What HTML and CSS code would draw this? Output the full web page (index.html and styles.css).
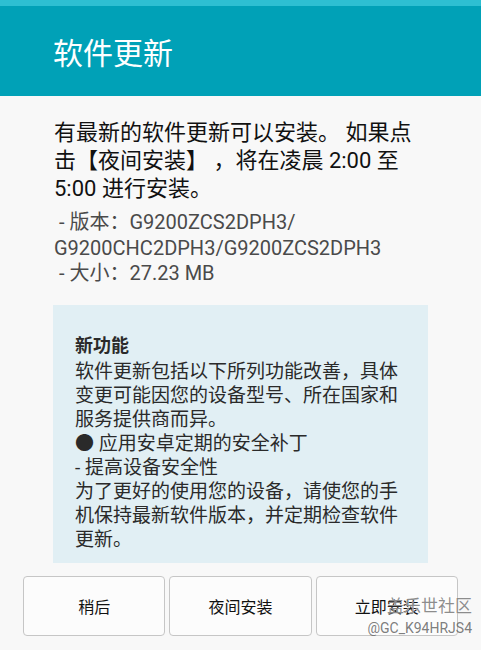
FILE: index.html
```html
<!DOCTYPE html>
<html lang="zh-CN">
<head>
    <meta charset="UTF-8">
    <meta name="viewport" content="width=device-width, initial-scale=1.0">
    <title>软件更新</title>
    <link rel="stylesheet" href="styles.css">
</head>
<body>
    <div class="status-strip"></div>

    <!-- Dialog title -->
    <header class="title-bar">
        <h1>软件更新</h1>
    </header>

    <main class="content">
        <p class="intro">有最新的软件更新可以安装。 如果点<br>击【夜间安装】 ，将在凌晨 2:00 至<br>5:00 进行安装。</p>
        <p class="meta">&nbsp;- 版本：G9200ZCS2DPH3/<br>G9200CHC2DPH3/G9200ZCS2DPH3<br>&nbsp;- 大小：27.23 MB</p>

        <!-- Release notes -->
        <section class="notes">
            <h2>新功能</h2>
            <p>软件更新包括以下所列功能改善，具体<br>变更可能因您的设备型号、所在国家和<br>服务提供商而异。<br>● 应用安卓定期的安全补丁<br>- 提高设备安全性<br>为了更好的使用您的设备，请使您的手<br>机保持最新软件版本，并定期检查软件<br>更新。</p>
        </section>
    </main>

    <div class="actions">
        <button>稍后</button>
        <button>夜间安装</button>
        <button>立即安装</button>
    </div>

    <div class="watermark">
        <span class="wm-name">盖乐世社区</span>
        <span class="wm-id">@GC_K94HRJS4</span>
    </div>
</body>
</html>
```

FILE: styles.css
```css
html, body {
    margin: 0;
    padding: 0;
}

body {
    width: 481px;
    height: 650px;
    position: relative;
    overflow: hidden;
    background-color: #f8f8f8;
    font-family: Roboto, "Noto Sans CJK SC", sans-serif;
    color: #111;
}

.status-strip {
    height: 6px;
    background-color: #2dbfd2;
}

.title-bar {
    height: 90px;
    background-color: #00a1b7;
    display: flex;
    align-items: center;
    padding-left: 53px;
}

.title-bar h1 {
    margin: 6px 0 0 0;
    font-size: 30px;
    font-weight: normal;
    color: #fff;
    line-height: 1;
}

.content {
    padding: 23px 53px 0 53px;
}

.intro {
    margin: 0;
    padding-left: 1px;
    font-size: 22px;
    line-height: 28px;
    color: #111;
}

.meta {
    margin: 7px 0 0 0;
    padding-left: 1px;
    font-size: 20px;
    line-height: 25.5px;
    color: #4a4a4a;
}

.notes {
    margin-top: 18px;
    background-color: #e1eff4;
    padding: 29px 10px 11px 22px;
}

.notes h2 {
    margin: 0 0 2px 0;
    font-size: 18px;
    line-height: 24px;
    font-weight: bold;
    color: #2a2a2a;
}

.notes p {
    margin: 0;
    font-size: 19px;
    line-height: 24px;
    color: #2a2a2a;
}

.actions {
    display: flex;
    gap: 4px;
    padding: 13px 23px 0 23px;
}

.actions button {
    flex: 1;
    height: 60px;
    background-color: #fcfcfc;
    border: 1px solid #c6c6c6;
    border-radius: 4px;
    font-family: Roboto, "Noto Sans CJK SC", sans-serif;
    font-size: 16px;
    color: #111;
    padding: 0;
}

/* screenshot watermark sitting over the last button */
.watermark {
    position: absolute;
    right: 9px;
    top: 598px;
    display: flex;
    flex-direction: column;
    align-items: flex-end;
    line-height: 1;
}

.wm-name {
    font-size: 17px;
    color: rgba(120, 120, 120, 0.85);
    text-shadow: 0 0 1px #fff;
}

.wm-id {
    margin-top: 6px;
    font-size: 14px;
    color: rgba(110, 110, 110, 0.9);
}
```
